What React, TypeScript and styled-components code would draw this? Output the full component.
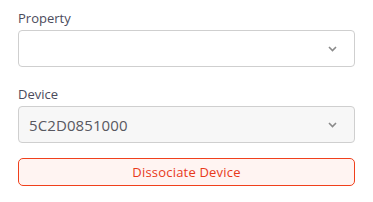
import React from 'react';
import styled, { createGlobalStyle } from 'styled-components';

const GlobalStyle = createGlobalStyle`
  body {
    margin: 0;
    background: #fff;
    font-family: "Open Sans", "Liberation Sans", sans-serif;
  }
`;

const Form = styled.div`
  width: 337px;
  padding: 10px 18px 0;
  display: flex;
  flex-direction: column;
`;

const Field = styled.div<{ $gap: number }>`
  display: flex;
  flex-direction: column;
  margin-bottom: ${(p) => p.$gap}px;
`;

const Label = styled.label`
  font-size: 13px;
  line-height: 16px;
  color: #4b4b5c;
  margin-bottom: 4px;
`;

const SelectBox = styled.div<{ $disabled?: boolean }>`
  height: 37px;
  box-sizing: border-box;
  border: 1px solid #cfcfcf;
  border-radius: 4px;
  background: ${(p) => (p.$disabled ? '#f7f7f7' : '#fff')};
  display: flex;
  align-items: center;
  justify-content: space-between;
  padding: 0 17px 0 10px;
`;

const Value = styled.span`
  font-size: 15px;
  letter-spacing: 0.1px;
  color: #58585f;
`;

const Chevron = styled.svg`
  width: 9px;
  height: 6px;
`;

const DangerButton = styled.button`
  height: 28px;
  box-sizing: border-box;
  border: 1px solid #f0401c;
  border-radius: 5px;
  background: #fff4f2;
  color: #e8391a;
  font-family: inherit;
  font-size: 13px;
  letter-spacing: 0.2px;
  cursor: pointer;
`;

const Arrow = () => (
  <Chevron viewBox="0 0 9 6">
    <path d="M1 1l3.5 3.5L8 1" fill="none" stroke="#8a8a8a" strokeWidth="1.6" />
  </Chevron>
);

export default function App() {
  return (
    <>
      <GlobalStyle />
      <Form>
        <Field $gap={19}>
          <Label>Property</Label>
          <SelectBox>
            <Value />
            <Arrow />
          </SelectBox>
        </Field>
        <Field $gap={15}>
          <Label>Device</Label>
          <SelectBox $disabled>
            <Value>5C2D0851000</Value>
            <Arrow />
          </SelectBox>
        </Field>
        <DangerButton>Dissociate Device</DangerButton>
      </Form>
    </>
  );
}
